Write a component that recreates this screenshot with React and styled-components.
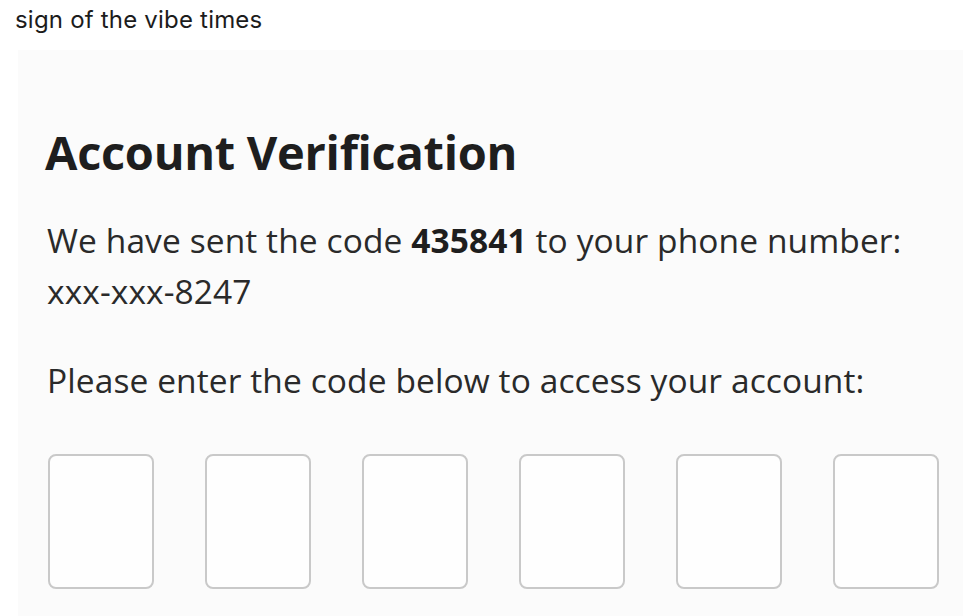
import styled, { createGlobalStyle } from 'styled-components';

const GlobalStyle = createGlobalStyle`
  html, body {
    margin: 0;
    padding: 0;
    background: #ffffff;
  }
  body {
    width: 978px;
    height: 616px;
    overflow: hidden;
  }
`;

const Page = styled.div`
  display: flex;
  flex-direction: column;
  height: 616px;
`;

const Caption = styled.p`
  margin: 0;
  padding: 5px 0 0 15px;
  height: 44px;
  box-sizing: border-box;
  font-family: Inter, 'Liberation Sans', sans-serif;
  font-size: 24px;
  color: #1c1c1c;
  letter-spacing: 0.2px;
`;

const Card = styled.div`
  flex: 1;
  margin-left: 18px;
  margin-right: 15px;
  margin-top: 6px;
  background: #fbfbfb;
  padding: 72px 0 0 27px;
  font-family: 'Open Sans', 'Noto Sans', sans-serif;
  color: #222222;
`;

const Title = styled.h1`
  margin: 0;
  font-size: 47px;
  font-weight: 700;
  line-height: 60px;
  color: #1e1e1e;
  letter-spacing: -0.3px;
`;

const Text = styled.p`
  margin: ${(p) => p.$top || 0}px 0 0 2px;
  font-size: 33.5px;
  line-height: 51px;
  color: #2a2a2a;
  letter-spacing: 0.1px;
  b {
    font-weight: 700;
    color: #1e1e1e;
  }
`;

const CodeRow = styled.div`
  display: flex;
  gap: 51px;
  margin: 48px 0 0 3px;
`;

const CodeBox = styled.div`
  width: 102px;
  height: 131px;
  border: 2px solid #c9c9c9;
  border-radius: 8px;
  background: #fefefe;
`;

export default function App() {
  return (
    <Page>
      <GlobalStyle />
      <Caption>sign of the vibe times</Caption>
      <Card>
        <Title>Account Verification</Title>
        <Text $top={33}>
          We have sent the code <b>435841</b> to your phone number:
          <br />
          xxx-xxx-8247
        </Text>
        <Text $top={38}>Please enter the code below to access your account:</Text>
        <CodeRow>
          {[0, 1, 2, 3, 4, 5].map((i) => (
            <CodeBox key={i} />
          ))}
        </CodeRow>
      </Card>
    </Page>
  );
}
